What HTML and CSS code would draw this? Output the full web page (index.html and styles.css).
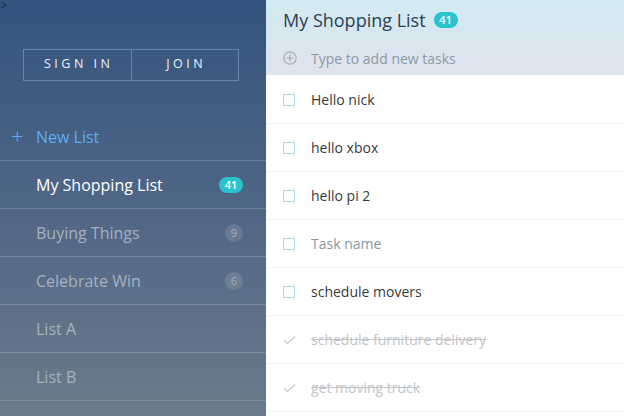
FILE: index.html
```html
<!DOCTYPE html>
<html>
<head>
<meta charset="utf-8">
<link rel="stylesheet" href="styles.css">
</head>
<body>
<div class="app">
  <aside class="sidebar">
    <svg class="corner" width="8" height="10" viewBox="0 0 8 10"><path d="M1 2 L6 5 L1 8" fill="none" stroke="#1f3550" stroke-width="1.2"/></svg>
    <div class="auth">
      <button class="auth-btn">SIGN IN</button>
      <button class="auth-btn">JOIN</button>
    </div>
    <div class="new-list"><span class="plus">+</span><span>New List</span></div>
    <ul class="lists">
      <li class="list-item active"><span>My Shopping List</span><span class="badge teal">41</span></li>
      <li class="list-item"><span>Buying Things</span><span class="badge grey">9</span></li>
      <li class="list-item"><span>Celebrate Win</span><span class="badge grey">6</span></li>
      <li class="list-item"><span>List A</span></li>
      <li class="list-item"><span>List B</span></li>
    </ul>
  </aside>
  <main class="main">
    <header class="head">
      <div class="title"><span>My Shopping List</span><span class="badge teal big">41</span></div>
      <div class="add">
        <svg class="add-icon" width="14" height="14" viewBox="0 0 14 14"><circle cx="7" cy="7" r="6.2" fill="none" stroke="#a3abb3" stroke-width="1.2"/><path d="M7 3.5 V10.5 M3.5 7 H10.5" stroke="#a3abb3" stroke-width="1.2"/></svg>
        <span>Type to add new tasks</span>
      </div>
    </header>
    <ul class="tasks">
      <li class="task"><span class="box"></span><span>Hello nick</span></li>
      <li class="task"><span class="box"></span><span>hello xbox</span></li>
      <li class="task"><span class="box"></span><span>hello pi 2</span></li>
      <li class="task placeholder"><span class="box"></span><span>Task name</span></li>
      <li class="task"><span class="box"></span><span>schedule movers</span></li>
      <li class="task done"><svg class="check" width="13" height="10" viewBox="0 0 13 10"><path d="M1 5.5 L4.5 8.5 L12 1.5" fill="none" stroke="#c4c8cb" stroke-width="1.1"/></svg><span>schedule furniture delivery</span></li>
      <li class="task done"><svg class="check" width="13" height="10" viewBox="0 0 13 10"><path d="M1 5.5 L4.5 8.5 L12 1.5" fill="none" stroke="#c4c8cb" stroke-width="1.1"/></svg><span>get moving truck</span></li>
    </ul>
  </main>
</div>
</body>
</html>
```
FILE: styles.css
```css
* { box-sizing: border-box; }
html, body { margin: 0; padding: 0; }
body {
  width: 624px; height: 416px; overflow: hidden;
  font-family: "Open Sans", "Noto Sans", sans-serif;
}
ul { list-style: none; margin: 0; padding: 0; }
.app { display: flex; height: 416px; }
.sidebar {
  position: relative;
  width: 266px; flex: none;
  background: linear-gradient(180deg, #33547f 0%, #4a6284 40%, #6b7b8b 100%);
  padding-top: 49px;
}
.corner { position: absolute; left: 0; top: 0; }
.auth {
  display: flex; margin: 0 27px 0 23px; height: 32px;
  border: 1px solid rgba(140,170,210,0.55);
}
.auth-btn {
  flex: 1; background: transparent; border: 0; padding: 0 0 3px 3px;
  color: #eef2f7; font-family: inherit; font-size: 12.5px; letter-spacing: 3.5px;
}
.auth-btn + .auth-btn { border-left: 1px solid rgba(140,170,210,0.55); }
.new-list {
  display: flex; align-items: center; height: 48px; margin-top: 32px;
  padding-left: 11px; color: #5dadf0; font-size: 16px;
  border-bottom: 1px solid rgba(255,255,255,0.17);
}
.plus { font-size: 22px; font-weight: 300; width: 25px; line-height: 1; margin-top: -3px; }
.list-item {
  display: flex; align-items: center; justify-content: space-between;
  height: 48px; padding: 0 23px 0 36px;
  color: #a6b2c0; font-size: 16px;
  border-bottom: 1px solid rgba(255,255,255,0.17);
}
.list-item.active { color: #ffffff; }
.badge {
  display: inline-flex; align-items: center; justify-content: center;
  font-size: 11px; font-weight: 600;
}
.badge.teal { background: #2bc2cf; color: #fff; height: 16px; min-width: 24px; border-radius: 8px; padding: 0 5px; }
.badge.grey { background: rgba(255,255,255,0.12); color: #a8b2bd; width: 18px; height: 18px; border-radius: 50%; font-weight: 400; font-size: 11px; }
.main { flex: 1; display: flex; flex-direction: column; background: #fff; }
.head {
  height: 75px;
  background: linear-gradient(180deg, #d2ebf3 0%, #d8e6f0 50%, #e0e4ef 100%);
  padding-left: 17px;
}
.title {
  display: flex; align-items: center; height: 38px; padding-top: 1px;
  color: #2a4053; font-size: 18px;
}
.badge.big { margin-left: 8px; font-size: 11.5px; }
.add {
  display: flex; align-items: center; height: 42px; margin-top: -1px;
  color: #8d99a2; font-size: 14px;
}
.add-icon { margin-right: 14px; }
.tasks { padding-top: 1px; }
.task {
  display: flex; align-items: center; height: 48px; padding-left: 17px;
  border-bottom: 1px solid #eef5f6;
  color: #353a3e; font-size: 14px;
}
.box {
  width: 12px; height: 12px; border: 1px solid #a7dce2; margin-right: 16px; flex: none;
}
.task.placeholder { color: #8a989f; }
.check { margin-right: 15px; flex: none; }
.task.done { color: #c2c5c8; text-decoration: line-through; }
```
